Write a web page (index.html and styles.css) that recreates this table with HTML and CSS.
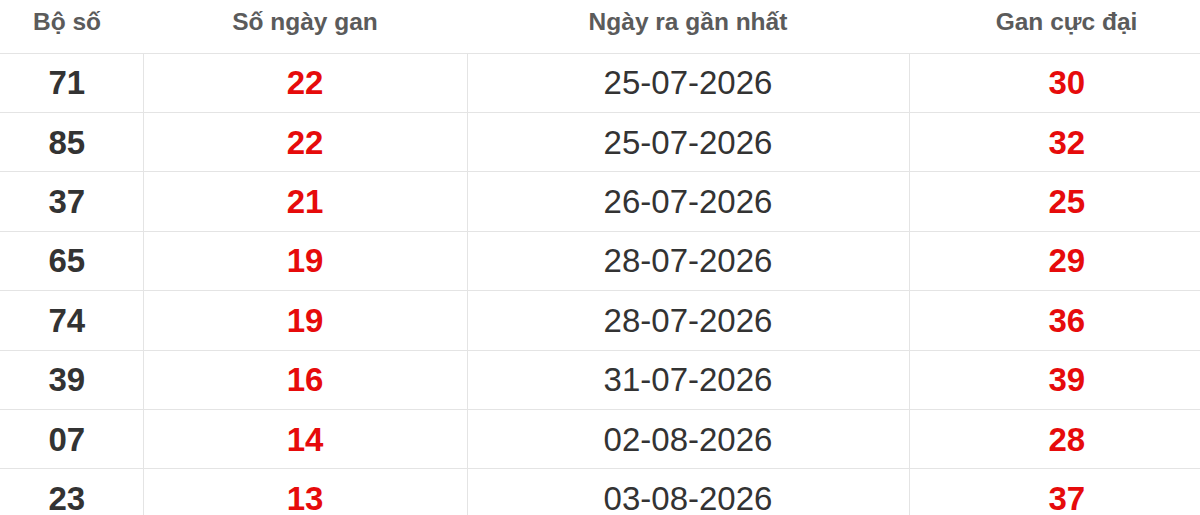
FILE: index.html
```html
<!DOCTYPE html>
<html lang="vi">
<head>
<meta charset="utf-8">
<title>Lô gan</title>
<link rel="stylesheet" href="styles.css">
</head>
<body>
<table class="gan-table">
  <colgroup>
    <col class="c1"><col class="c2"><col class="c3"><col class="c4">
  </colgroup>
  <thead>
    <tr><th class="first">Bộ số</th><th>Số ngày gan</th><th>Ngày ra gần nhất</th><th class="last">Gan cực đại</th></tr>
  </thead>
  <tbody>
    <tr><td class="first num">71</td><td class="red">22</td><td class="date">25-07-2026</td><td class="last red">30</td></tr>
    <tr><td class="first num">85</td><td class="red">22</td><td class="date">25-07-2026</td><td class="last red">32</td></tr>
    <tr><td class="first num">37</td><td class="red">21</td><td class="date">26-07-2026</td><td class="last red">25</td></tr>
    <tr><td class="first num">65</td><td class="red">19</td><td class="date">28-07-2026</td><td class="last red">29</td></tr>
    <tr><td class="first num">74</td><td class="red">19</td><td class="date">28-07-2026</td><td class="last red">36</td></tr>
    <tr><td class="first num">39</td><td class="red">16</td><td class="date">31-07-2026</td><td class="last red">39</td></tr>
    <tr><td class="first num">07</td><td class="red">14</td><td class="date">02-08-2026</td><td class="last red">28</td></tr>
    <tr><td class="first num">23</td><td class="red">13</td><td class="date">03-08-2026</td><td class="last red">37</td></tr>
  </tbody>
</table>
</body>
</html>
```
FILE: styles.css
```css
html, body {
  margin: 0;
  padding: 0;
  background: #ffffff;
  overflow: hidden;
}
body {
  font-family: "Liberation Sans", Arial, sans-serif;
}
.gan-table {
  width: 1200px;
  border-collapse: collapse;
  table-layout: fixed;
}
.c1 { width: 143px; }
.c2 { width: 324px; }
.c3 { width: 442px; }
.c4 { width: 291px; }

.gan-table th {
  height: 53px;
  padding: 0;
  font-size: 24.5px;
  font-weight: bold;
  color: #5b5b5b;
  text-align: center;
  vertical-align: middle;
  border-bottom: 1px solid #e4e4e4;
  line-height: 1;
  padding-bottom: 8px;
  box-sizing: border-box;
}
.gan-table td {
  height: 59.43px;
  padding: 0;
  box-sizing: border-box;
  text-align: center;
  vertical-align: middle;
  font-size: 33px;
  line-height: 1;
  border-bottom: 1px solid #e4e4e4;
  border-left: 1px solid #e4e4e4;
}
.gan-table td.first { border-left: none; }
.gan-table .first { padding-right: 9px; }
.gan-table .last { padding-left: 24px; }
.num {
  font-weight: bold;
  color: #333333;
}
.red {
  font-weight: bold;
  color: #e60b0b;
}
.date {
  color: #333333;
}
```
